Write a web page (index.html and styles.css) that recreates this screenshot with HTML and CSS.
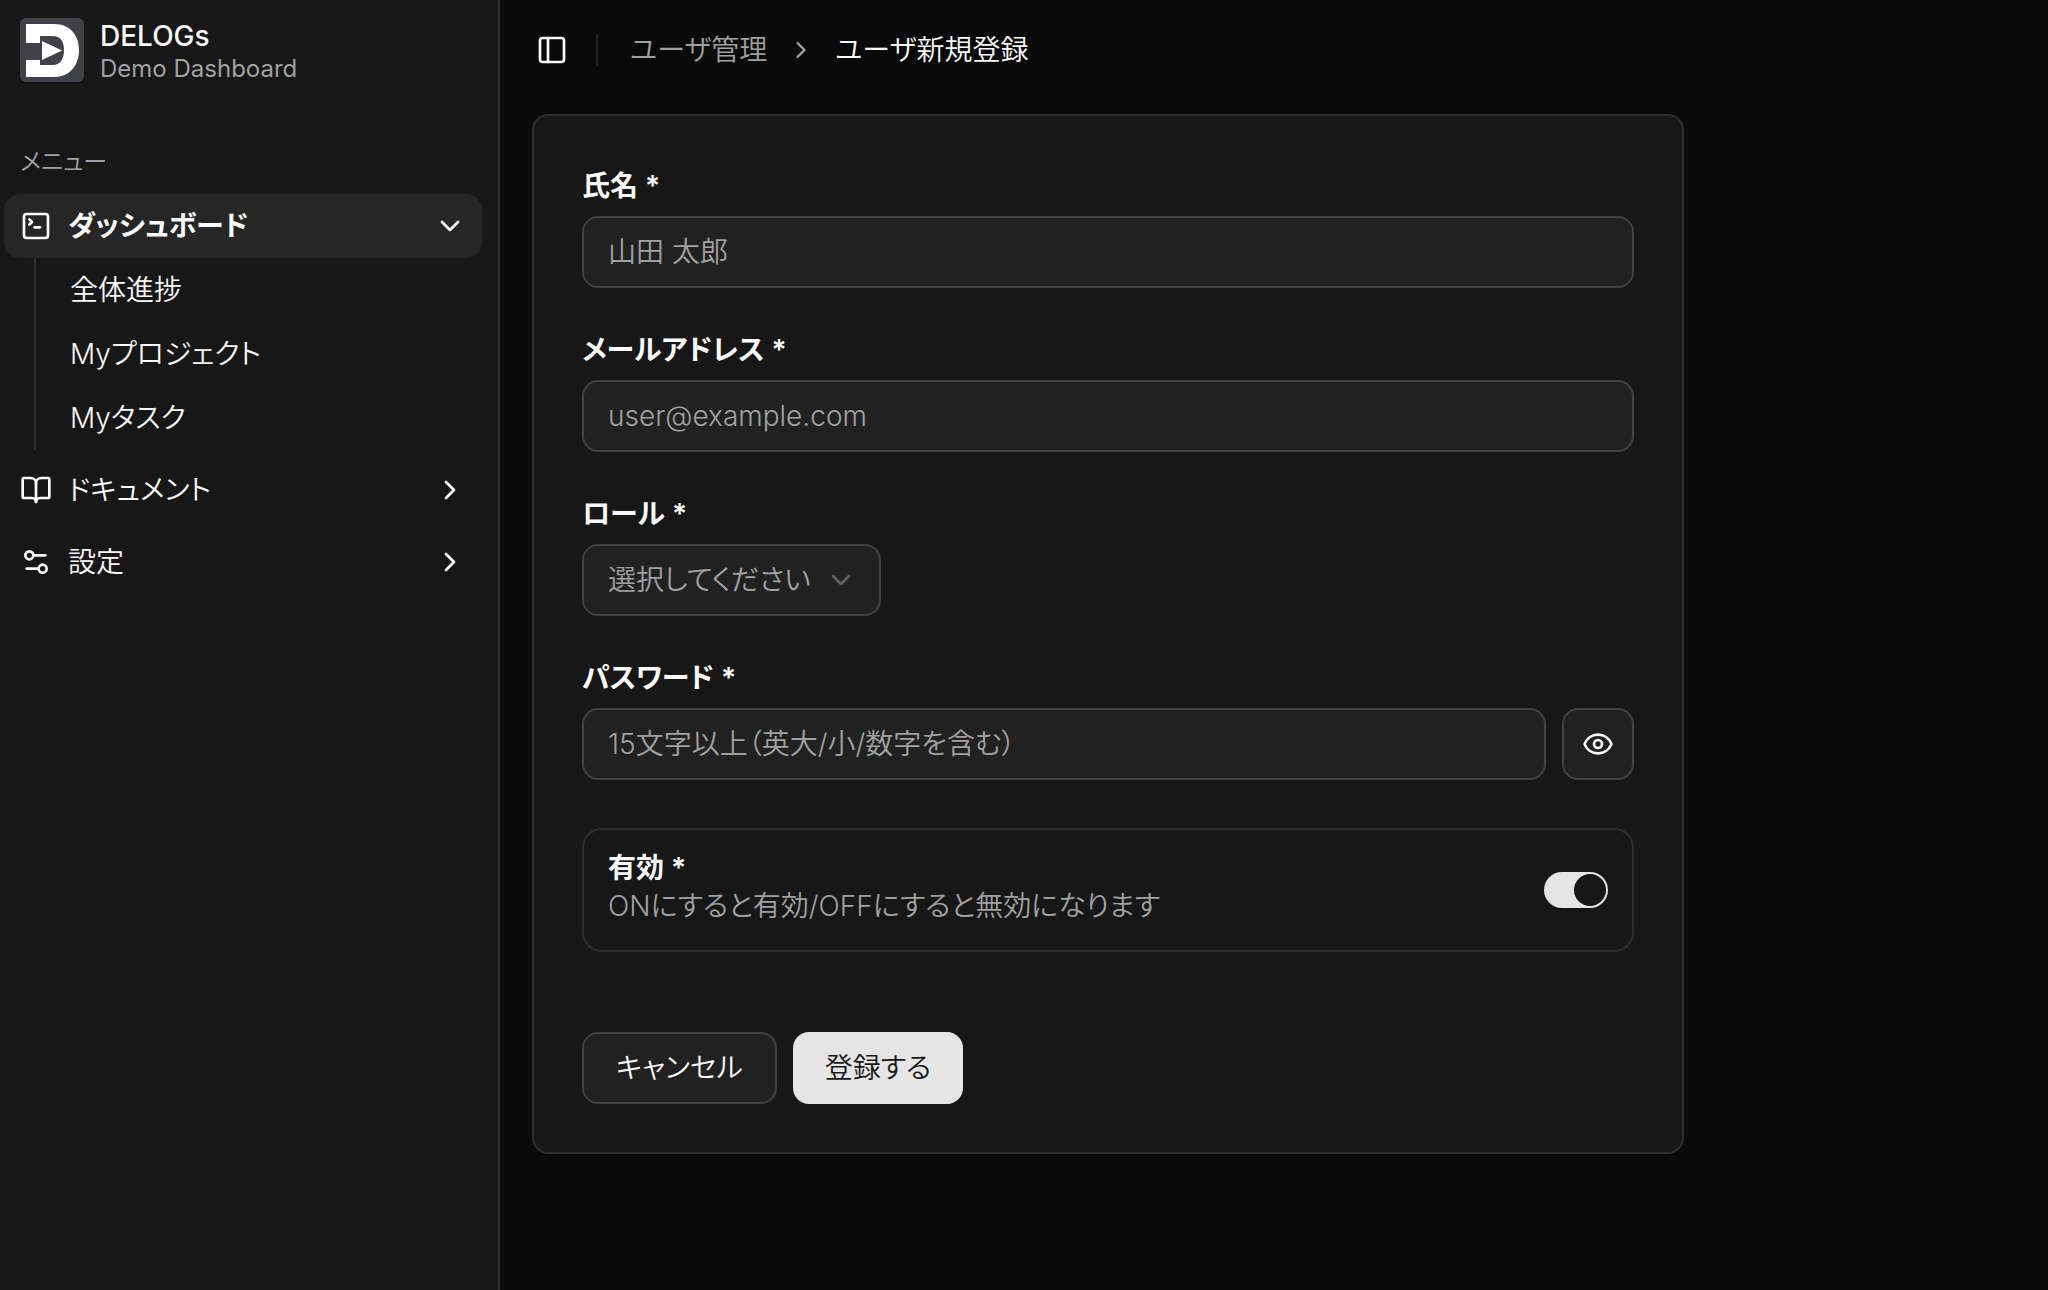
FILE: index.html
```html
<!DOCTYPE html>
<html lang="ja">
<head>
    <meta charset="UTF-8">
    <meta name="viewport" content="width=device-width, initial-scale=1.0">
    <title>ユーザ新規登録 | DELOGs</title>
    <link rel="stylesheet" href="styles.css">
</head>
<body>
    <div class="layout">
        <aside class="sidebar">
            <div class="brand">
                <svg class="brand-logo" viewBox="0 0 64 64" aria-hidden="true">
                    <rect width="64" height="64" rx="6" fill="#41414a"/>
                    <path d="M6 6H34C50 6 59 17 59 32S50 59 34 59H6V42H20V47H33C40 47 44 41 44 32S40 18 33 18H20V25H6Z" fill="#fff"/>
                    <path d="M22 23L42 32.500L22 42Z" fill="#fff"/>
                </svg>
                <div class="brand-text">
                    <span class="brand-name">DELOGs</span>
                    <span class="brand-sub">Demo Dashboard</span>
                </div>
            </div>

            <nav class="nav">
                <p class="nav-title">メニュー</p>
                <ul class="nav-list">
                    <li>
                        <button type="button" class="nav-item active" aria-expanded="true">
                            <svg class="icon" viewBox="0 0 24 24"><path d="m7 11 2-2-2-2"/><path d="M11 13h4"/><rect x="3" y="3" width="18" height="18" rx="2"/></svg>
                            <span class="nav-label">ダッシュボード</span>
                            <svg class="icon" viewBox="0 0 24 24"><path d="m6 9 6 6 6-6"/></svg>
                        </button>
                        <ul class="nav-sub">
                            <li><a href="#">全体進捗</a></li>
                            <li><a href="#">Myプロジェクト</a></li>
                            <li><a href="#">Myタスク</a></li>
                        </ul>
                    </li>
                    <li>
                        <button type="button" class="nav-item" aria-expanded="false">
                            <svg class="icon" viewBox="0 0 24 24"><path d="M12 7v14"/><path d="M3 18a1 1 0 0 1-1-1V4a1 1 0 0 1 1-1h5a4 4 0 0 1 4 4 4 4 0 0 1 4-4h5a1 1 0 0 1 1 1v13a1 1 0 0 1-1 1h-6a3 3 0 0 0-3 3 3 3 0 0 0-3-3z"/></svg>
                            <span class="nav-label">ドキュメント</span>
                            <svg class="icon" viewBox="0 0 24 24"><path d="m9 18 6-6-6-6"/></svg>
                        </button>
                    </li>
                    <li>
                        <button type="button" class="nav-item" aria-expanded="false">
                            <svg class="icon" viewBox="0 0 24 24"><path d="M14 17H5"/><path d="M19 7h-9"/><circle cx="17" cy="17" r="3"/><circle cx="7" cy="7" r="3"/></svg>
                            <span class="nav-label">設定</span>
                            <svg class="icon" viewBox="0 0 24 24"><path d="m9 18 6-6-6-6"/></svg>
                        </button>
                    </li>
                </ul>
            </nav>
        </aside>

        <main class="main">
            <header class="header">
                <button type="button" class="sidebar-toggle" aria-label="サイドバーの切り替え">
                    <svg class="icon" viewBox="0 0 24 24"><rect x="3" y="3" width="18" height="18" rx="2"/><path d="M9 3v18"/></svg>
                </button>
                <span class="separator"></span>
                <nav class="breadcrumb">
                    <a href="#">ユーザ管理</a>
                    <svg class="icon icon-sm" viewBox="0 0 24 24"><path d="m9 18 6-6-6-6"/></svg>
                    <span class="current" aria-current="page">ユーザ新規登録</span>
                </nav>
            </header>

            <form class="card">
                <div class="field">
                    <label for="name">氏名 *</label>
                    <input type="text" id="name" class="control" placeholder="山田 太郎">
                </div>
                <div class="field">
                    <label for="email">メールアドレス *</label>
                    <input type="email" id="email" class="control" placeholder="user@example.com">
                </div>
                <div class="field">
                    <label for="role">ロール *</label>
                    <div class="select-wrap">
                        <select id="role" class="control">
                            <option value="">選択してください</option>
                        </select>
                        <svg class="icon" viewBox="0 0 24 24"><path d="m6 9 6 6 6-6"/></svg>
                    </div>
                </div>
                <div class="field">
                    <label for="password">パスワード *</label>
                    <div class="password-row">
                        <input type="password" id="password" class="control" placeholder="15文字以上（英大/小/数字を含む）">
                        <button type="button" class="btn btn-outline btn-icon" aria-label="パスワードを表示">
                            <svg class="icon" viewBox="0 0 24 24"><path d="M2.062 12.348a1 1 0 0 1 0-.696 10.750 10.750 0 0 1 19.876 0 1 1 0 0 1 0 .696 10.750 10.750 0 0 1-19.876 0"/><circle cx="12" cy="12" r="3"/></svg>
                        </button>
                    </div>
                </div>
                <div class="switch-box">
                    <div class="switch-text">
                        <label for="active">有効 *</label>
                        <p id="active-note">ONにすると有効/OFFにすると無効になります</p>
                    </div>
                    <input type="checkbox" id="active" class="switch" role="switch" aria-describedby="active-note" checked>
                </div>
                <div class="actions">
                    <button type="button" class="btn btn-outline">キャンセル</button>
                    <button type="submit" class="btn btn-primary">登録する</button>
                </div>
            </form>
        </main>
    </div>
</body>
</html>
```
FILE: styles.css
```css
* { margin: 0; padding: 0; box-sizing: border-box; }

:root {
    --background: #0a0a0a;
    --card: #171717;
    --foreground: #fafafa;
    --muted: #a1a1a1;
    --accent: #262626;
    --primary: #e5e5e5;
    --border: rgba(255, 255, 255, 0.1);
    --input-border: #424242;
    --input-bg: #212121;
}

body {
    font-family: Inter, "Noto Sans CJK JP", sans-serif;
    font-feature-settings: "palt";
    font-size: 28px;
    font-weight: 350;
    line-height: 40px;
    background: var(--background);
    color: var(--foreground);
}
button, input, select {
    font: inherit;
    font-feature-settings: inherit;
    color: inherit;
}
button { background: none; border: none; cursor: pointer; }
a { color: inherit; text-decoration: none; }
ul { list-style: none; }

.icon {
    width: 32px;
    height: 32px;
    flex-shrink: 0;
    fill: none;
    stroke: currentColor;
    stroke-width: 2;
    stroke-linecap: round;
    stroke-linejoin: round;
}
.icon-sm { width: 28px; height: 28px; }

.layout { display: flex; min-height: 100vh; }

/* sidebar */
.sidebar {
    width: 500px;
    flex-shrink: 0;
    background: var(--card);
    border-right: 2px solid var(--border);
}
.brand { display: flex; align-items: flex-start; gap: 16px; padding: 18px 20px 16px; }
.brand-logo { width: 64px; height: 64px; flex-shrink: 0; }
.brand-text { display: flex; flex-direction: column; }
.brand-name { font-weight: 500; line-height: 36px; }
.brand-sub { font-size: 24px; font-weight: 400; line-height: 30px; color: var(--muted); }

.nav { padding: 30px 16px 16px 4px; }
.nav-title { padding: 0 16px; font-size: 24px; line-height: 64px; color: var(--muted); }
.nav-list { display: flex; flex-direction: column; gap: 8px; }
.nav-item {
    display: flex;
    align-items: center;
    gap: 16px;
    width: 100%;
    height: 64px;
    padding: 0 16px;
    border-radius: 16px;
    text-align: left;
}
.nav-item.active { background: var(--accent); font-weight: 600; }
.nav-label { flex: 1; }
.nav-sub { margin-left: 30px; padding-left: 34px; border-left: 2px solid var(--border); }
.nav-sub a { display: block; line-height: 64px; }

/* header */
.main { flex: 1; min-width: 0; padding: 0 32px 32px; }
.header { display: flex; align-items: center; height: 100px; }
.sidebar-toggle { display: flex; padding: 4px; }
.separator { width: 2px; height: 32px; margin: 0 32px 0 24px; background: var(--border); }
.breadcrumb { display: flex; align-items: center; gap: 20px; color: var(--muted); }
.breadcrumb .current { color: var(--foreground); }

/* form */
.card {
    display: flex;
    flex-direction: column;
    gap: 48px;
    max-width: 1152px;
    margin-top: 14px;
    padding: 56px 48px 48px;
    background: var(--card);
    border: 2px solid var(--border);
    border-radius: 16px;
}
.field { display: flex; flex-direction: column; align-items: flex-start; gap: 16px; }
label { font-weight: 600; line-height: 28px; }
.control {
    width: 100%;
    height: 72px;
    padding: 0 24px;
    background: var(--input-bg);
    border: 2px solid var(--input-border);
    border-radius: 16px;
}
.control::placeholder { color: var(--muted); opacity: 1; }
.select-wrap { position: relative; }
.select-wrap .control { appearance: none; width: auto; padding-right: 66px; color: var(--muted); }
.select-wrap .icon {
    position: absolute;
    top: 20px;
    right: 24px;
    color: var(--muted);
    opacity: 0.5;
    pointer-events: none;
}
.password-row { display: flex; gap: 16px; width: 100%; }

.switch-box {
    display: flex;
    align-items: center;
    justify-content: space-between;
    padding: 24px;
    border: 2px solid var(--border);
    border-radius: 20px;
}
.switch-text { display: flex; flex-direction: column; gap: 4px; }
.switch-text p { color: var(--muted); }
.switch {
    appearance: none;
    display: flex;
    width: 64px;
    height: 36px;
    padding: 2px;
    border-radius: 18px;
    background: var(--input-border);
    cursor: pointer;
}
.switch::before {
    content: "";
    width: 32px;
    height: 32px;
    border-radius: 50%;
    background: var(--card);
}
.switch:checked { justify-content: flex-end; background: var(--primary); }

.actions { display: flex; gap: 16px; padding-top: 32px; }
.btn { height: 72px; padding: 0 32px; border-radius: 16px; }
.btn-outline { background: var(--input-bg); border: 2px solid var(--input-border); }
.btn-primary { background: var(--primary); color: var(--card); }
.btn-icon {
    display: flex;
    align-items: center;
    justify-content: center;
    flex: 0 0 72px;
    padding: 0;
}
```
